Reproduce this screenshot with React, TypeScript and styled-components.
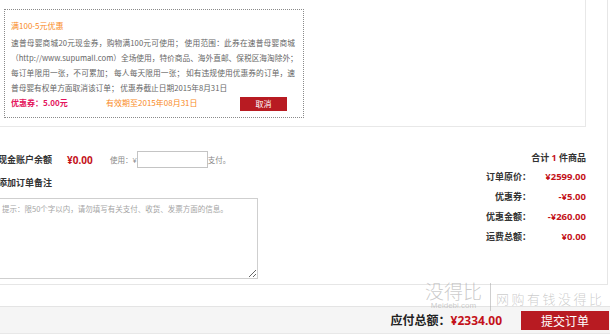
import { FC } from "react";
import styled, { createGlobalStyle } from "styled-components";

const GlobalStyle = createGlobalStyle`
  html, body {
    margin: 0;
    padding: 0;
    background: #fff;
  }
  body {
    font-family: "Noto Sans", "Noto Sans CJK SC", sans-serif;
    color: #333;
  }
`;

const couponLines = [
  "速普母婴商城20元现金券，购物满100元可使用； 使用范围：此券在速普母婴商城",
  "（http://www.supumall.com）全场使用，特价商品、海外直邮、保税区海淘除外；",
  "每订单限用一张，不可累加； 每人每天限用一张； 如有违规使用优惠券的订单，速",
];

const summary = [
  { label: "订单原价：", value: "¥2599.00" },
  { label: "优惠券：", value: "-¥5.00" },
  { label: "优惠金额：", value: "-¥260.00" },
  { label: "运费总额：", value: "¥0.00" },
];

const App: FC = () => {
  return (
    <Viewport>
      <GlobalStyle />
      <Page>
        <Main>
          <CouponPanel>
            <Coupon>
              <CouponTitle>满100-5元优惠</CouponTitle>
              {couponLines.map((line) => (
                <CouponLine key={line} $justify>
                  {line}
                </CouponLine>
              ))}
              <CouponLine>普母婴有权单方面取消该订单； 优惠券截止日期2015年8月31日</CouponLine>
              <CouponFoot>
                <CouponValue>优惠券：5.00元</CouponValue>
                <CouponExpire>有效期至2015年08月31日</CouponExpire>
                <CancelButton>取消</CancelButton>
              </CouponFoot>
            </Coupon>
          </CouponPanel>

          <Bottom>
            <LeftCol>
              <BalanceRow>
                <BoldLabel>现金账户余额</BoldLabel>
                <Balance>¥0.00</Balance>
                <SmallText>使用：¥</SmallText>
                <AmountInput />
                <SmallText>支付。</SmallText>
              </BalanceRow>
              <NoteTitle>添加订单备注</NoteTitle>
              <NoteArea placeholder="提示：限50个字以内，请勿填写有关支付、收货、发票方面的信息。" />
            </LeftCol>

            <RightCol>
              <Count>
                合计 <Red>1</Red> 件商品
              </Count>
              <SummaryGrid>
                {summary.map((row) => (
                  <SummaryRow key={row.label}>
                    <SummaryLabel>{row.label}</SummaryLabel>
                    <SummaryValue>{row.value}</SummaryValue>
                  </SummaryRow>
                ))}
              </SummaryGrid>
            </RightCol>
          </Bottom>
        </Main>

        <Footer>
          <TotalLabel>应付总额：</TotalLabel>
          <TotalValue>¥2334.00</TotalValue>
          <SubmitButton>提交订单</SubmitButton>
        </Footer>
      </Page>

      <Watermark>
        <MarkLogo>
          <MarkBig>没得比</MarkBig>
          <MarkSmall>Meidebi.com</MarkSmall>
        </MarkLogo>
        <MarkDivider />
        <MarkSlogan>网购有钱没得比</MarkSlogan>
      </Watermark>
    </Viewport>
  );
};

export default App;

const Viewport = styled.div`
  position: relative;
  width: 610px;
  height: 334px;
  overflow: hidden;
`;

const Page = styled.div`
  width: 620px;
  margin-left: -10px;
`;

const Main = styled.div`
  box-sizing: border-box;
  width: 618px;
  padding-right: 21px;
  border-right: 1px solid #e6e6e6;
  border-bottom: 1px solid #e6e6e6;
`;

const CouponPanel = styled.div`
  box-sizing: border-box;
  width: 596px;
  margin-top: -1px;
  padding: 9px 0 8px 13px;
  border: 1px solid #e8e8e8;
`;

const Coupon = styled.div`
  box-sizing: border-box;
  width: 300px;
  height: 109px;
  padding: 8px 8px 0 6px;
  border: 1px dotted #8a8a8a;
  font-family: "Noto Sans CJK SC", sans-serif;
  font-size: 7.7px;
`;

const CouponTitle = styled.div`
  line-height: 15px;
  margin-bottom: 2px;
  font-size: 8px;
  color: #f98a1d;
`;

const CouponLine = styled.div<{ $justify?: boolean }>`
  line-height: 15px;
  color: #666;
  white-space: nowrap;
  text-align: ${(p) => (p.$justify ? "justify" : "left")};
  text-align-last: ${(p) => (p.$justify ? "justify" : "auto")};
  text-justify: inter-character;
`;

const CouponFoot = styled.div`
  display: flex;
  align-items: center;
  height: 15px;
  font-size: 8px;
`;

const CouponValue = styled.span`
  width: 95px;
  color: #e4145c;
  font-weight: bold;
`;

const CouponExpire = styled.span`
  flex: 1;
  color: #f98a1d;
`;

const CancelButton = styled.button`
  width: 47px;
  height: 14px;
  margin: 3px 8px 0 0;
  padding: 0;
  border: 0;
  background: #b81b22;
  color: #fff;
  font-family: "Noto Sans CJK SC", sans-serif;
  font-size: 8px;
  line-height: 14px;
`;

const Bottom = styled.div`
  display: flex;
  justify-content: space-between;
  padding: 23px 0 5px 8px;
`;

const LeftCol = styled.div`
  display: flex;
  flex-direction: column;
  padding-top: 1px;
`;

const BalanceRow = styled.div`
  display: flex;
  align-items: center;
  height: 17px;
`;

const BoldLabel = styled.span`
  width: 69px;
  font-size: 9px;
  font-weight: bold;
  color: #333;
`;

const Balance = styled.span`
  width: 43px;
  font-size: 10px;
  font-weight: bold;
  color: #c4121a;
`;

const SmallText = styled.span`
  font-size: 7.5px;
  color: #888;
`;

const AmountInput = styled.input`
  box-sizing: border-box;
  width: 71px;
  height: 17px;
  margin: 0;
  padding: 0 2px;
  border: 1px solid #c4c4c4;
  outline: none;
`;

const NoteTitle = styled.div`
  margin-top: 7px;
  line-height: 16px;
  font-size: 9px;
  font-weight: bold;
  color: #333;
`;

const NoteArea = styled.textarea`
  box-sizing: border-box;
  width: 260px;
  height: 81px;
  margin-top: 7px;
  padding: 4px 3px;
  border: 1px solid #cfcfcf;
  font-family: "Noto Sans CJK SC", sans-serif;
  font-size: 7.5px;
  outline: none;
  resize: both;

  &::placeholder {
    color: #a5a5a5;
  }
`;

const RightCol = styled.div`
  display: flex;
  flex-direction: column;
  align-items: flex-end;
`;

const Count = styled.div`
  line-height: 16px;
  font-size: 9px;
  font-weight: bold;
  color: #333;
`;

const Red = styled.span`
  color: #c4121a;
`;

const SummaryGrid = styled.div`
  display: flex;
  flex-direction: column;
`;

const SummaryRow = styled.div`
  display: grid;
  grid-template-columns: 90px 55px;
  align-items: center;
  height: 20px;
`;

const SummaryLabel = styled.span`
  text-align: right;
  font-size: 9px;
  font-weight: bold;
  color: #333;
`;

const SummaryValue = styled.span`
  text-align: right;
  font-size: 9.5px;
  font-weight: bold;
  color: #c4121a;
`;

const Footer = styled.div`
  display: flex;
  align-items: center;
  justify-content: flex-end;
  box-sizing: border-box;
  height: 28px;
  margin-top: 21px;
  padding-right: 1px;
  border-top: 1px solid #e4e4e4;
  border-bottom: 1px solid #e8e8e8;
  background: #f5f5f5;
`;

const TotalLabel = styled.span`
  font-size: 12px;
  font-weight: bold;
  color: #222;
`;

const TotalValue = styled.span`
  margin-right: 19px;
  font-size: 12px;
  font-weight: bold;
  color: #c4121a;
`;

const SubmitButton = styled.button`
  width: 88px;
  height: 19px;
  padding: 0;
  border: 0;
  background: #b81b22;
  color: #fff;
  font-family: "Noto Sans CJK SC", sans-serif;
  font-size: 12px;
  line-height: 19px;
`;

const Watermark = styled.div`
  position: absolute;
  left: 425px;
  top: 281px;
  display: flex;
  align-items: flex-start;
  pointer-events: none;
  color: rgba(160, 160, 160, 0.55);
`;

const MarkLogo = styled.div`
  display: flex;
  flex-direction: column;
  align-items: center;
`;

const MarkBig = styled.span`
  font-family: "Noto Sans CJK SC", sans-serif;
  font-size: 19px;
  font-weight: 300;
  line-height: 20px;
`;

const MarkSmall = styled.span`
  font-family: "Liberation Sans", sans-serif;
  font-size: 8px;
  line-height: 10px;
`;

const MarkDivider = styled.div`
  width: 1px;
  height: 28px;
  margin: 2px 5px 0 8px;
  background: rgba(160, 160, 160, 0.5);
`;

const MarkSlogan = styled.span`
  margin-top: 11px;
  font-family: "Noto Sans CJK SC", serif;
  font-size: 13px;
  font-weight: 300;
  letter-spacing: 2.5px;
  line-height: 14px;
`;
